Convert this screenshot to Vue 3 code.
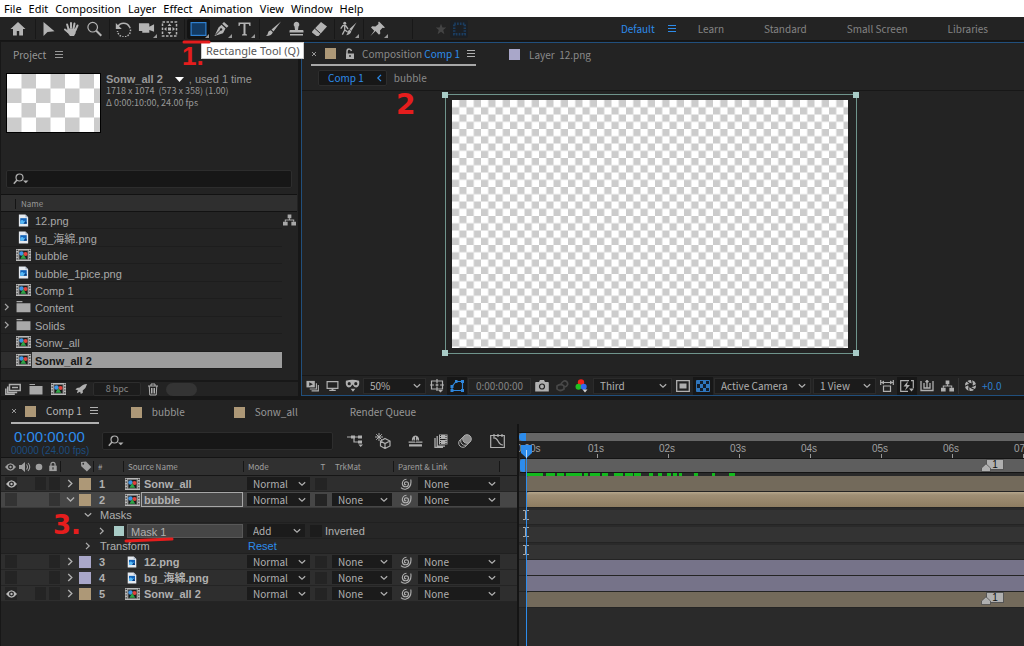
<script setup>
import { ref } from 'vue'

const menus = ['File', 'Edit', 'Composition', 'Layer', 'Effect', 'Animation', 'View', 'Window', 'Help']

const toolGroups = [
  [{ id: 'arrow', label: 'Selection Tool' }, { id: 'hand', label: 'Hand Tool' }, { id: 'zoom', label: 'Zoom Tool' }],
  [{ id: 'rotate', label: 'Rotation Tool' }, { id: 'camera', label: 'Camera Tool', more: true }, { id: 'anchor', label: 'Pan Behind Tool' }],
  [{ id: 'rect', label: 'Rectangle Tool', more: true, active: true }, { id: 'pen', label: 'Pen Tool', more: true }, { id: 'type', label: 'Type Tool', more: true }],
  [{ id: 'brush', label: 'Brush Tool' }, { id: 'stamp', label: 'Clone Stamp Tool' }, { id: 'eraser', label: 'Eraser Tool' }],
  [{ id: 'roto', label: 'Roto Brush Tool', more: true }],
  [{ id: 'pin', label: 'Puppet Pin Tool', more: true }]
]

const workspaces = ['Learn', 'Standard', 'Small Screen', 'Libraries']

const items = [
  { name: '12.png', icon: 'png' },
  { name: 'bg_海綿.png', icon: 'png' },
  { name: 'bubble', icon: 'comp' },
  { name: 'bubble_1pice.png', icon: 'png' },
  { name: 'Comp 1', icon: 'comp' },
  { name: 'Content', icon: 'folder', open: true },
  { name: 'Solids', icon: 'folder', open: true },
  { name: 'Sonw_all', icon: 'comp' },
  { name: 'Sonw_all 2', icon: 'comp', selected: true }
]

const rows = [
  { kind: 'layer', n: 1, name: 'Sonw_all', icon: 'comp', color: 'sand', visible: true, solo: true },
  { kind: 'layer', n: 2, name: 'bubble', icon: 'comp', color: 'sand', matte: true, selected: true },
  { kind: 'masks' },
  { kind: 'mask' },
  { kind: 'transform' },
  { kind: 'layer', n: 3, name: '12.png', icon: 'png', color: 'lavender', matte: true },
  { kind: 'layer', n: 4, name: 'bg_海綿.png', icon: 'png', color: 'lavender', matte: true },
  { kind: 'layer', n: 5, name: 'Sonw_all 2', icon: 'comp', color: 'sand', matte: true, visible: true, solo: true, marker: true }
]

const seconds = [1, 2, 3, 4, 5, 6, 7]
const secondWidth = 71
const cached = [[0, 17], [20, 9], [31, 7], [40, 16], [58, 4], [64, 10], [76, 6], [88, 9], [99, 8], [108, 7], [123, 4], [132, 4], [141, 4], [147, 4], [153, 3], [168, 4], [186, 3], [203, 6]]

const projectQuery = ref('')
const layerQuery = ref('')
</script>

<template>
  <svg class="defs" aria-hidden="true">
    <symbol id="home" viewBox="0 0 16 16"><path fill="currentColor" d="M8 1 .5 8H3v6.500h3.800V10h2.400v4.500H13V8h2.500z" /></symbol>
    <symbol id="arrow" viewBox="0 0 16 16"><path fill="currentColor" d="M3 1v14l4-4 7-.8z" /></symbol>
    <symbol id="hand" viewBox="0 0 16 16"><path fill="none" stroke="currentColor" stroke-width="2" stroke-linecap="round" d="M5 8 3.600 3.500M7.500 7V2M10 7.500l1-5M12 9l2-4.500M4.500 11 1.500 8.500" /><path fill="currentColor" d="M4 7.500l9 .2-1 4.500L10.500 15H6.500L3.500 11z" /></symbol>
    <symbol id="zoom" viewBox="0 0 16 16"><circle cx="6.200" cy="6.200" r="4.800" fill="none" stroke="currentColor" stroke-width="1.200" /><path stroke="currentColor" stroke-width="2" d="m9.800 9.800 5 5" /></symbol>
    <symbol id="rotate" viewBox="0 0 16 16"><path fill="none" stroke="currentColor" stroke-width="1.500" d="M2.200 6A6.500 6.500 0 0 1 14 6" /><path fill="none" stroke="currentColor" stroke-width="1.500" stroke-dasharray="1.500 1.300" d="M14 6A6.500 6.500 0 1 1 2 10" /><path fill="currentColor" d="M.3 2v6h6z" /></symbol>
    <symbol id="camera" viewBox="0 0 18 16"><path fill="currentColor" d="M1 2h10q1 0 1 1v2.500L17 3v8l-5-2v3H4.500v-2H1z" /></symbol>
    <symbol id="anchor" viewBox="0 0 16 16"><rect x="1" y="1" width="14" height="14" fill="none" stroke="currentColor" stroke-width="1.500" stroke-dasharray="2.500 1.500" /><path fill="currentColor" d="M8 2.500 10 5H6zM8 13.500 6 11h4zM2.500 8 5 6v4zM13.500 8 11 10V6zM6.500 6.500h3v3h-3z" /></symbol>
    <symbol id="rect" viewBox="0 0 16 16"><rect x=".6" y="1.600" width="14.800" height="12.800" fill="#123a63" stroke="#2f80d0" stroke-width="1.200" /></symbol>
    <symbol id="pen" viewBox="0 0 16 16"><path fill="currentColor" d="m10.500 1 4.500 4-1.800 1.800-4.500-4zM8 3.800l4 3.800-2.500 4.600L1 15l4-8.500z" /><path stroke="#232323" d="m2 14 5-5" /><circle cx="7.600" cy="8.400" r="1.200" fill="#232323" /></symbol>
    <symbol id="type" viewBox="0 0 16 16"><path fill="currentColor" d="M2 1.500h12V5h-1l-.8-2H9v10l1.500.6v.9h-5v-.9L7 13V3H3.800L3 5H2z" /></symbol>
    <symbol id="brush" viewBox="0 0 16 16"><path fill="currentColor" d="M15.500.5 8 10.500 6 8.500zM5.300 9.300l2 2Q6.500 15 .5 15q2-1.200 2-3.200t2.800-2.500" /></symbol>
    <symbol id="stamp" viewBox="0 0 16 16"><path fill="currentColor" d="M8 .8a2.800 2.800 0 0 1 2 4.800L9.500 9h4.700q.8 0 .8 1v1.500H1V10q0-1 .8-1h4.700L6 5.600A2.800 2.800 0 0 1 8 .8M1.500 13h13v1.500h-13z" /></symbol>
    <symbol id="eraser" viewBox="0 0 16 16"><path fill="currentColor" d="M9.500 1 15.500 5.500 7 15H5L.5 11.500v-1z" /><path stroke="#232323" d="m3.500 7.500 5.500 5" /></symbol>
    <symbol id="roto" viewBox="0 0 18 16"><circle cx="5" cy="2" r="1.600" fill="currentColor" /><path fill="none" stroke="currentColor" stroke-width="1.400" d="M.8 7.500 3 4.500h3L8.500 8M5 4.500V9L2.500 14M5 9l3 2" /><path fill="currentColor" d="M17.500 1 12 10l-2-2zM9.500 8.500l2.500 2q-1 4-5.500 4 1.500-1.500 1.500-3z" /></symbol>
    <symbol id="pin" viewBox="0 0 16 16"><path fill="currentColor" d="m9.500.5 6 6-1.500.5-1-.3-2.500 2.800.3 3-1.300 1.300-3.500-3.700L1 15l3.700-5.200L1.500 6.500l1.200-1.200 3.200.2L9 3 8.700 1.500z" /></symbol>
    <symbol id="star" viewBox="0 0 16 16"><path fill="currentColor" d="m8 1 2 5h5l-4 3.300L12.500 15 8 11.500 3.500 15 5 9.300 1 6h5z" /></symbol>
    <symbol id="snap" viewBox="0 0 16 16"><rect x="1.500" y="1.500" width="13" height="13" fill="none" stroke="#1b3d60" stroke-width="3" stroke-dasharray="2 1.500" /></symbol>
    <symbol id="menu" viewBox="0 0 10 10"><path stroke="currentColor" d="M1 1.500h8M1 4.500h8M1 7.500h8" /></symbol>
    <symbol id="cross" viewBox="0 0 6 6"><path stroke="currentColor" d="m1 1 4 4M5 1 1 5" /></symbol>
    <symbol id="unlock" viewBox="0 0 12 12"><path fill="currentColor" d="M3 5.500h8V11H3z" /><path fill="none" stroke="currentColor" stroke-width="1.500" d="M4 6V3.500Q4 1 6 1t2.500 2" /><path fill="#232323" d="M6.300 7h1.400v2H6.300z" /></symbol>
    <symbol id="lock" viewBox="0 0 12 12"><path fill="currentColor" d="M1.500 5h9v6.500h-9z" /><path fill="none" stroke="currentColor" stroke-width="1.500" d="M3.500 6V3.500Q3.500 1 6 1t2.500 2.500V6" /><path fill="#303030" d="M5.300 7h1.400v2.500H5.300z" /></symbol>
    <symbol id="search" viewBox="0 0 16 12"><circle cx="6.500" cy="4.500" r="3.500" fill="none" stroke="currentColor" stroke-width="1.200" /><path stroke="currentColor" stroke-width="1.500" d="M4 7 .8 10.800" /><path fill="currentColor" d="M10 7.500h5.500l-2.700 2.800z" /></symbol>
    <symbol id="png" viewBox="0 0 11 14"><path fill="#e4e9ef" d="M.5.500h7L10.500 3.500v10H.5z" /><path fill="#a9b7c8" d="M7.500.5v3h3z" /><path fill="#1262b8" d="M2 4.500h7v6H2z" /><path fill="#55b8f5" d="M2 8q2-3 4 0l1-1 2 2v1.500H2z" /><path fill="#0b3b80" d="m5.500 10.500 2-3L9 9v1.500z" /></symbol>
    <symbol id="comp" viewBox="0 0 15 12"><path fill="#b9b9b9" d="M0 0h15v12H0z" /><path stroke="#222" stroke-width="1.200" stroke-dasharray="1.200 1.600" d="M1.200.8V12M13.800.8V12" /><path fill="#777" d="M2.500 1h10v10h-10z" /><path fill="#1c1c1c" d="M3.500 2h8v8h-8z" /><circle cx="5.500" cy="4.500" r="2.200" fill="#3e95e6" /><circle cx="9.500" cy="5" r="2.100" fill="#e2423c" /><path fill="#2fa447" d="m7.300 5 2.900 4.700H4.400z" /></symbol>
    <symbol id="folder" viewBox="0 0 14 11"><path fill="#a9a9a9" d="M.5 0H6v1H.500zM.5 2h13v8.500H.500z" /></symbol>
    <symbol id="chev" viewBox="0 0 8 8"><path fill="none" stroke="currentColor" stroke-width="1.200" d="m2 .8 3.200 3.200L2 7.200" /></symbol>
    <symbol id="chevd" viewBox="0 0 8 8"><path fill="none" stroke="currentColor" stroke-width="1.200" d="M.8 2.300 4 5.300l3.200-3" /></symbol>
    <symbol id="tree" viewBox="0 0 14 12"><path fill="currentColor" d="M5 0h4v4H5zM0 8h5v4H0zM9 8h5v4H9z" /><path fill="none" stroke="currentColor" stroke-width="1.200" d="M7 4v2M2.500 8V6h9v2" /></symbol>
    <symbol id="interpret" viewBox="0 0 16 12"><path fill="none" stroke="currentColor" stroke-width="1.500" d="M4.500 1.500h10.700v6H4.500zM2.700 3.500v6h9.500M.8 5.500v5.700h9" /><path stroke="currentColor" stroke-width="1.500" d="M7 4.500h6" /></symbol>
    <symbol id="rocket" viewBox="0 0 14 12"><path fill="currentColor" d="M13 .5Q8 .8 5 4.500l-3 .3-1.500 2 2.500.4-1 3.300 3.500-1.500.8 2.500L8.500 10l-.2-2.500Q12 5 13 .500" /></symbol>
    <symbol id="trash" viewBox="0 0 12 13"><path fill="none" stroke="currentColor" d="M1 3h10M4 3V1h4v2M2.200 3l.6 9h6.400l.6-9M4.500 5v5.500M6 5v5.500M7.500 5v5.500" /></symbol>
    <symbol id="always" viewBox="0 0 14 12"><path fill="currentColor" d="M.5.500h9v7h-9z" /><path fill="none" stroke="currentColor" stroke-width="1.200" d="M11.200 3v6.200H4M13.300 5v6.300H6" /><path fill="#232323" d="m3.500 2 4 2-4 2z" /></symbol>
    <symbol id="monitor" viewBox="0 0 14 12"><path fill="none" stroke="currentColor" stroke-width="1.300" d="M1.200 1.200h11.600v7.300H1.200z" /><path fill="currentColor" d="M6 8.500h2V10h2.500v1.500h-7V10H6z" /></symbol>
    <symbol id="mask" viewBox="0 0 16 14"><path fill="currentColor" d="M1 1.500q7-2.500 14 0 1 6-3 7-2.500 0-4-3-1.500 3-4 3-4-1-3-7M6 10h5l-2.500 3z" /><circle cx="4.500" cy="4.500" r="1.700" fill="#232323" /><circle cx="11.500" cy="4.500" r="1.700" fill="#232323" /></symbol>
    <symbol id="guides" viewBox="0 0 14 14"><path fill="none" stroke="currentColor" stroke-width="1.200" d="M1.500 2h11v8h-11zM7 0v4M7 8v4M0 6h4M10 6h4M5.500 6h3M7 4.500v3" /><path fill="currentColor" d="M8 11h5l-2.500 2.500z" /></symbol>
    <symbol id="shape" viewBox="0 0 14 12"><path fill="none" stroke="#2f86dc" stroke-width="1.200" d="M2 10.500V6.500L6 1.500h6.500v9z" /><path fill="#2f86dc" d="M.5 9h3v3h-3zM.5 5h3v3h-3zM5 0h2.500v3H5zM11 0h3v3h-3zM11 9h3v3h-3z" /></symbol>
    <symbol id="photo" viewBox="0 0 14 12"><path fill="currentColor" d="M1 2h3l1-2h4l1 2h3q.8 0 .8 1v8.500H.2V3q0-1 .8-1" /><circle cx="7" cy="6.500" r="2.500" fill="none" stroke="#232323" stroke-width="1.200" /></symbol>
    <symbol id="ghost" viewBox="0 0 14 12"><path fill="none" stroke="#484848" stroke-width="1.700" d="M2 6q4-3 7 0v3q-4 3-7 0zM6 4q3-5 6-2 2 3-2 5" /></symbol>
    <symbol id="rgb" viewBox="0 0 14 14"><circle cx="6" cy="3.500" r="3.200" fill="#f0211a" /><circle cx="3.500" cy="7.800" r="3" fill="#21bf20" /><circle cx="8.700" cy="7.800" r="3" fill="#3469f0" /><path fill="#d0d0d0" d="M7.500 10.500h5L10 13.500z" /></symbol>
    <symbol id="roi" viewBox="0 0 14 12"><path fill="none" stroke="currentColor" stroke-width="1.300" d="M.7.700h12.600v10.600H.7z" /><path fill="currentColor" d="M3.500 3.500h7v5h-7z" /></symbol>
    <symbol id="grid" viewBox="0 0 14 12"><path fill="#111d2b" d="M0 0h14v12H0z" /><path fill="none" stroke="#2f76bd" d="M.5.500h13v11H.500z" /><path fill="#2f76bd" d="M1 1h3v3H1zM7 1h3v3H7zM4 4h3v4H4zM10 4h3v4h-3zM1 8h3v3H1zM7 8h3v3H7z" /></symbol>
    <symbol id="pixel" viewBox="0 0 14 12"><path fill="none" stroke="currentColor" stroke-width="1.200" d="M1 2.500h12M.7 0v5M13.300 0v5M3.500 6h7v5.300h-7z" /><path fill="currentColor" d="m1 2.500 3-2v4zM13 2.500l-3-2v4z" /></symbol>
    <symbol id="fast" viewBox="0 0 14 12"><path fill="none" stroke="currentColor" stroke-width="1.200" d="M9 .7H.7v10.600H8M11 .7h2.300V8" /><path fill="currentColor" d="M8 1 3.500 6.500h3L5 10.500 10 5H7zM9 8.500h5l-2.500 3z" /></symbol>
    <symbol id="timegraph" viewBox="0 0 14 12"><path fill="none" stroke="currentColor" stroke-width="1.300" d="M1 1v9.500h12V1M4 3v5h6V3M7 .5V8M5.500 2 7 .5 8.500 2" /></symbol>
    <symbol id="aperture" viewBox="0 0 14 14"><circle cx="7" cy="7" r="4.300" fill="none" stroke="currentColor" stroke-width="3.400" /><path stroke="#232323" stroke-width="1.100" d="m8 .5 1 5M13.500 6 9 8M12 11.500 7.500 9.500M5.500 13.500 5 9M.5 8 5 6M2.500 2l4 3" /></symbol>
    <symbol id="flow" viewBox="0 0 16 13"><path fill="none" stroke="currentColor" stroke-width="1.200" d="M0 3h13M7 3v5h6" /><path fill="currentColor" d="M4 1.500h4v3H4zM11 1.500h4v3h-4zM11 6.500h4v3h-4zM11.500 10.500H16L13.700 13z" /></symbol>
    <symbol id="draft" viewBox="0 0 16 16"><path fill="none" stroke="currentColor" stroke-width="1.200" d="m10 5.500 5 2.500v5l-5 2.500L5.500 13V8zM5.500 8l4.500 2.500L15 8M10 10.500v5" /><path stroke="currentColor" d="M4 0v8M0 4h8M1.200 1.200l5.600 5.600M6.800 1.200 1.200 6.800" /></symbol>
    <symbol id="shy" viewBox="0 0 16 13"><path fill="currentColor" d="M4 6q0-5 4-5.500Q12 1 12 6zM.5 7h15v1.500H.500zM1 10h14v2.500H1z" /><path stroke="#232323" d="M8 2v6M5.500 5.500h1M9.500 5.500h1" /></symbol>
    <symbol id="blend" viewBox="0 0 14 14"><path fill="currentColor" d="M5 .500h8.500v10H5z" /><path fill="none" stroke="currentColor" stroke-width="1.300" d="M3.200 2v10.200H11M1 4v9.500h8" /><path stroke="#232323" stroke-dasharray="1 1" d="M6.500 1v9M12 1v9" /><path stroke="#232323" d="M7 5.500h4.500" /></symbol>
    <symbol id="blur" viewBox="0 0 14 14"><circle cx="5" cy="9" r="4.300" fill="none" stroke="currentColor" /><circle cx="7" cy="7" r="4.300" fill="#232323" stroke="currentColor" /><circle cx="9" cy="5" r="4.300" fill="#8c8c8c" stroke="currentColor" /></symbol>
    <symbol id="graph" viewBox="0 0 15 14"><path fill="none" stroke="currentColor" stroke-width="1.200" d="M.7 1.500h13.600v12H.7zM3 4q3-1 5 3t5 4M4 0v3M8 0v3M12 0v3" /></symbol>
    <symbol id="eye" viewBox="0 0 12 8"><path fill="currentColor" d="M0 4q3-4 6-4t6 4Q9 8 6 8T0 4" /><circle cx="6" cy="4" r="2.700" fill="#242424" /><circle cx="6" cy="4" r="1.300" fill="currentColor" /></symbol>
    <symbol id="speaker" viewBox="0 0 12 10"><path fill="currentColor" d="M0 3h2.500L6 0v10L2.500 7H0z" /><path fill="none" stroke="currentColor" stroke-width="1.100" d="M7.500 2.500q2 2.500 0 5M9 1q3.500 4 0 8" /></symbol>
    <symbol id="solo" viewBox="0 0 8 8"><circle cx="4" cy="4" r="3.300" fill="currentColor" /></symbol>
    <symbol id="tag" viewBox="0 0 12 12"><path fill="currentColor" d="M.5 1 6 .500 11.800 6.500 7 11.500.8 5.800z" /><circle cx="3" cy="3" r="1" fill="#303030" /></symbol>
    <symbol id="spiral" viewBox="0 0 12 12"><path fill="none" stroke="currentColor" stroke-width="1.100" d="M6.200 6.300q-1.200 1-1.700-.3-.3-2 1.700-2.200 2.300 0 2.300 2.300-.2 2.700-3 2.700-3-.2-3.200-3.200Q2.600 1.500 6.500 1.200M10.800 1.500q1.200 8-5.300 9.700-3 .3-4.500-1.500" /></symbol>
    <symbol id="beam" viewBox="0 0 8 10"><path fill="none" stroke="#a9a9a9" d="M1 .500h2.500v9H1M7 .500H4.500v9H7" /></symbol>
    <symbol id="house" viewBox="0 0 10 9"><path fill="#b0b0b0" stroke="#444" stroke-width=".7" d="M.5 8.500V5L5 .800 9.500 5v3.500z" /></symbol>
  </svg>

  <div class="app">
    <nav class="menubar" aria-label="Main menu">
      <button v-for="m in menus" :key="m" type="button">{{ m }}</button>
    </nav>

    <header class="toolbar">
      <button class="home" type="button" aria-label="Home"><svg width="16" height="16"><use href="#home" /></svg></button>
      <i class="first"></i>
      <template v-for="(g, gi) in toolGroups" :key="gi">
        <i v-if="gi"></i>
        <button v-for="t in g" :key="t.id" class="tool" :class="{ active: t.active, more: t.more }" type="button" :aria-label="t.label">
          <svg width="17" height="16"><use :href="'#' + t.id" /></svg>
          <span v-if="t.active" class="tip">Rectangle Tool (Q)</span>
        </button>
      </template>
      <i class="wide"></i>
      <button class="mini" type="button" aria-label="Favourite"><svg width="12" height="12"><use href="#star" /></svg></button>
      <button class="mini boxed" type="button" aria-label="Snapping"><svg width="13" height="14"><use href="#snap" /></svg></button>
      <nav class="spaces" aria-label="Workspaces">
        <span class="current"><button type="button">Default</button><button type="button" aria-label="Workspace menu"><svg width="10" height="10"><use href="#menu" /></svg></button></span>
        <button v-for="w in workspaces" :key="w" type="button">{{ w }}</button>
      </nav>
    </header>

    <main class="upper">
      <section class="project">
        <div class="ptab"><span>Project</span><button type="button" aria-label="Panel menu"><svg width="10" height="10"><use href="#menu" /></svg></button></div>
        <div class="info">
          <svg class="thumb" width="95" height="60" viewBox="0 0 95 60">
            <defs><pattern id="big" x="1" y="1" width="29" height="29" patternUnits="userSpaceOnUse"><path fill="#fff" d="M0 0h29v29H0z" /><path fill="#ccc" d="M14.500 0H29v14.500H14.500zM0 14.500h14.500V29H0z" /></pattern></defs>
            <path fill="#000" d="M0 0h95v60H0z" /><path fill="url(#big)" d="M1 1h93v58H1z" />
          </svg>
          <div class="meta">
            <p class="title"><b>Sonw_all 2</b><svg width="9" height="5"><path fill="#fff" d="M0 0h9L4.500 5z" /></svg><span>, used 1 time</span></p>
            <p>1718 x 1074&nbsp; (573 x 358) (1.00)</p>
            <p>Δ 0:00:10:00, 24.00 fps</p>
          </div>
        </div>
        <label class="search"><svg width="16" height="12"><use href="#search" /></svg><input v-model="projectQuery" type="text" aria-label="Search project"></label>
        <div class="listing">
          <table>
            <thead><tr><th scope="col">Name</th></tr></thead>
            <tbody>
              <tr v-for="it in items" :key="it.name" :class="{ selected: it.selected }">
                <td>
                  <span class="twirl"><svg v-if="it.open" width="8" height="8"><use href="#chev" /></svg></span>
                  <span class="kind"><svg :width="it.icon === 'png' ? 11 : 15" :height="it.icon === 'png' ? 13 : 12"><use :href="'#' + it.icon" /></svg></span>
                  <span class="label">{{ it.name }}</span>
                </td>
              </tr>
            </tbody>
          </table>
          <button class="chart" type="button" aria-label="Project flowchart"><svg width="13" height="12"><use href="#tree" /></svg></button>
        </div>
        <footer class="pfoot">
          <button type="button" aria-label="Interpret footage"><svg width="16" height="12"><use href="#interpret" /></svg></button>
          <button type="button" aria-label="New folder"><svg width="14" height="11"><use href="#folder" /></svg></button>
          <button type="button" aria-label="New composition"><svg width="15" height="12"><use href="#comp" /></svg></button>
          <button type="button" aria-label="Project settings"><svg width="13" height="12"><use href="#rocket" /></svg></button>
          <button class="bpc" type="button">8 bpc</button>
          <button type="button" aria-label="Delete"><svg width="12" height="13"><use href="#trash" /></svg></button>
          <span class="thumbbar"></span>
        </footer>
      </section>

      <section class="viewer">
        <div class="vtabs">
          <div class="vtab on">
            <button class="x" type="button" aria-label="Close"><svg width="6" height="6"><use href="#cross" /></svg></button><i class="sw sand"></i>
            <svg class="latch" width="12" height="12"><use href="#unlock" /></svg>
            <span>Composition <b>Comp 1</b></span>
            <button class="pm" type="button" aria-label="Panel menu"><svg width="10" height="10"><use href="#menu" /></svg></button>
          </div>
          <div class="vtab"><i class="sw lavender"></i><span>Layer&nbsp; 12.png</span></div>
        </div>
        <div class="crumbs">
          <button class="crumb" type="button">Comp 1 <svg width="8" height="8"><use href="#chev" /></svg></button>
          <button type="button">bubble</button>
        </div>
        <div class="stage">
          <div class="frame">
            <svg width="100%" height="100%">
              <defs><pattern id="small" width="14.500" height="14.500" patternUnits="userSpaceOnUse"><path fill="#fff" d="M0 0h14.500v14.500H0z" /><path fill="#ccc" d="M7.250 0h7.250v7.250H7.250zM0 7.250h7.250v7.250H0z" /></pattern></defs>
              <rect width="100%" height="100%" fill="url(#small)" />
            </svg>
            <i class="h tl"></i><i class="h tr"></i><i class="h bl"></i><i class="h br"></i>
          </div>
        </div>
        <footer class="vfoot">
          <button type="button" aria-label="Always preview"><svg width="13" height="12"><use href="#always" /></svg></button>
          <button type="button" aria-label="Primary viewer"><svg width="13" height="12"><use href="#monitor" /></svg></button>
          <button type="button" aria-label="Stereo view"><svg width="15" height="14"><use href="#mask" /></svg></button>
          <label class="drop zoomsel"><select aria-label="Magnification"><option>50%</option></select><svg width="8" height="8"><use href="#chevd" /></svg></label>
          <button type="button" aria-label="Grid and guides"><svg width="14" height="14"><use href="#guides" /></svg></button>
          <button class="dark" type="button" aria-label="Mask visibility"><svg width="14" height="12"><use href="#shape" /></svg></button>
          <button class="clock" type="button">0:00:00:00</button>
          <button type="button" aria-label="Take snapshot"><svg width="14" height="12"><use href="#photo" /></svg></button>
          <button type="button" aria-label="Show snapshot"><svg width="14" height="12"><use href="#ghost" /></svg></button>
          <button type="button" aria-label="Channels"><svg width="14" height="14"><use href="#rgb" /></svg></button>
          <label class="drop ressel"><select aria-label="Resolution"><option>Third</option></select><svg width="8" height="8"><use href="#chevd" /></svg></label>
          <button type="button" aria-label="Region of interest"><svg width="14" height="12"><use href="#roi" /></svg></button>
          <button class="dark" type="button" aria-label="Transparency grid"><svg width="14" height="12"><use href="#grid" /></svg></button>
          <label class="drop camsel"><select aria-label="3D view"><option>Active Camera</option></select><svg width="8" height="8"><use href="#chevd" /></svg></label>
          <label class="drop viewsel"><select aria-label="View layout"><option>1 View</option></select><svg width="8" height="8"><use href="#chevd" /></svg></label>
          <button type="button" aria-label="Pixel aspect ratio"><svg width="14" height="12"><use href="#pixel" /></svg></button>
          <button class="dark" type="button" aria-label="Fast previews"><svg width="14" height="12"><use href="#fast" /></svg></button>
          <button type="button" aria-label="Timeline"><svg width="14" height="12"><use href="#timegraph" /></svg></button>
          <button type="button" aria-label="Flowchart"><svg width="13" height="12"><use href="#tree" /></svg></button>
          <i class="bar"></i>
          <button type="button" aria-label="Reset exposure"><svg width="13" height="13"><use href="#aperture" /></svg></button>
          <button class="expo" type="button">+0.0</button>
        </footer>
      </section>
    </main>

    <section class="timeline">
      <div class="ttabs">
        <div class="ttab on"><button class="x" type="button" aria-label="Close"><svg width="6" height="6"><use href="#cross" /></svg></button><i class="sw sand"></i><span>Comp 1</span><button class="pm" type="button" aria-label="Panel menu"><svg width="10" height="10"><use href="#menu" /></svg></button></div>
        <div class="ttab t2"><i class="sw sand"></i><span>bubble</span></div>
        <div class="ttab t3"><i class="sw sand"></i><span>Sonw_all</span></div>
        <div class="ttab t4"><span>Render Queue</span></div>
      </div>
      <div class="tbody">
        <div class="outline">
          <div class="tctl">
            <div class="time"><button type="button">0:00:00:00</button><span>00000 (24.00 fps)</span></div>
            <label class="search lsearch"><svg width="16" height="12"><use href="#search" /></svg><input v-model="layerQuery" type="text" aria-label="Search layers"></label>
            <div class="switches">
              <button type="button" aria-label="Mini-flowchart"><svg width="16" height="13"><use href="#flow" /></svg></button>
              <button type="button" aria-label="Draft 3D"><svg width="16" height="16"><use href="#draft" /></svg></button>
              <button type="button" aria-label="Hide shy layers"><svg width="15" height="12"><use href="#shy" /></svg></button>
              <button type="button" aria-label="Frame blending"><svg width="14" height="14"><use href="#blend" /></svg></button>
              <button type="button" aria-label="Motion blur"><svg width="14" height="14"><use href="#blur" /></svg></button>
              <button type="button" aria-label="Graph editor"><svg width="15" height="14"><use href="#graph" /></svg></button>
            </div>
          </div>
          <table class="layers">
            <thead>
              <tr>
                <th scope="col" aria-label="Video"><svg width="11" height="8"><use href="#eye" /></svg></th>
                <th scope="col" aria-label="Audio"><svg width="12" height="10"><use href="#speaker" /></svg></th>
                <th scope="col" aria-label="Solo"><svg width="8" height="8"><use href="#solo" /></svg></th>
                <th scope="col" aria-label="Lock"><svg width="10" height="11"><use href="#lock" /></svg></th>
                <th class="sep"></th>
                <th scope="col" aria-label="Label"><svg width="12" height="11"><use href="#tag" /></svg></th>
                <th class="sep num" scope="col">#</th>
                <th class="sep src" scope="col">Source Name</th>
                <th class="sep" scope="col">Mode</th>
                <th class="mid" scope="col">T</th>
                <th class="trk" scope="col">TrkMat</th>
                <th class="sep par" scope="col">Parent &amp; Link</th>
                <th class="sep"></th>
              </tr>
            </thead>
            <tbody>
              <template v-for="(r, i) in rows" :key="i">
                <tr v-if="r.kind === 'layer'" :class="{ selected: r.selected }">
                  <td><button class="cell" type="button" :aria-label="'Visibility of ' + r.name"><svg v-if="r.visible" width="11" height="8"><use href="#eye" /></svg></button></td>
                  <td></td>
                  <td><button v-if="r.solo" class="cell" type="button" :aria-label="'Solo ' + r.name"></button></td>
                  <td><button class="cell" type="button" :aria-label="'Lock ' + r.name"></button></td>
                  <td class="mid twist"><svg width="9" height="9"><use :href="r.selected ? '#chevd' : '#chev'" /></svg></td>
                  <td><i class="sw" :class="r.color"></i></td>
                  <td class="idx">{{ r.n }}</td>
                  <td class="name"><span class="kind"><svg :width="r.icon === 'png' ? 10 : 15" height="12"><use :href="'#' + r.icon" /></svg></span><b>{{ r.name }}</b></td>
                  <td><label class="drop"><select :aria-label="'Mode of ' + r.name"><option>Normal</option></select><svg width="8" height="8"><use href="#chevd" /></svg></label></td>
                  <td class="mid"><input class="flag" type="checkbox" :aria-label="'Preserve transparency of ' + r.name"></td>
                  <td><label v-if="r.matte" class="drop"><select :aria-label="'Track matte of ' + r.name"><option>None</option></select><svg width="8" height="8"><use href="#chevd" /></svg></label></td>
                  <td class="mid"><svg width="12" height="12"><use href="#spiral" /></svg></td>
                  <td><label class="drop"><select :aria-label="'Parent of ' + r.name"><option>None</option></select><svg width="8" height="8"><use href="#chevd" /></svg></label></td>
                </tr>
                <tr v-else-if="r.kind === 'masks'" class="prop"><td class="lead"><svg width="8" height="8"><use href="#chevd" /></svg>Masks</td></tr>
                <tr v-else-if="r.kind === 'mask'" class="prop tall">
                  <td class="lead deep"><svg width="8" height="8"><use href="#chev" /></svg><i class="sw aqua"></i><span class="maskname">Mask 1</span></td>
                  <td><label class="drop"><select aria-label="Mask mode"><option>Add</option></select><svg width="8" height="8"><use href="#chevd" /></svg></label></td>
                  <td class="inv"><label><input class="flag" type="checkbox">Inverted</label></td>
                </tr>
                <tr v-else class="prop"><td class="lead"><svg width="8" height="8"><use href="#chev" /></svg>Transform</td><td class="resetcell"><button class="reset" type="button">Reset</button></td></tr>
              </template>
            </tbody>
          </table>
        </div>

        <div class="tracks">
          <div class="navbar"><i></i></div>
          <div class="ruler">
            <span class="zero">0:00s</span>
            <span v-for="s in seconds" :key="s" class="sec" :style="{ left: s * secondWidth + 7 + 'px' }">0{{ s }}s</span>
          </div>
          <div class="area"><i class="grip"></i><span class="marker"><svg width="10" height="9"><use href="#house" /></svg><em>1</em></span></div>
          <div class="cache"><i v-for="c in cached" :key="c[0]" :style="{ left: c[0] + 'px', width: c[1] + 'px' }"></i></div>
          <div v-for="(r, i) in rows" :key="i" class="track" :class="[r.kind, r.color, { selected: r.selected }]">
            <div v-if="r.kind === 'layer'" class="clip"></div>
            <svg v-else width="8" height="10"><use href="#beam" /></svg>
            <span v-if="r.marker" class="marker"><svg width="10" height="9"><use href="#house" /></svg><em>1</em></span>
          </div>
          <div class="playhead"><svg width="11" height="13"><path fill="#2d8ceb" d="M0 0h11v8l-5.500 5L0 8z" /><path stroke="#bcd8f5" d="M5.500 5v8" /></svg></div>
        </div>
      </div>
    </section>

    <div class="note one">1.<svg width="29" height="4"><path d="M2 2h25" /></svg></div>
    <div class="note two">2</div>
    <div class="note three">3.</div>
    <svg class="note line" width="50" height="6"><path d="M2 4q22-1 46-2" /></svg>
  </div>
</template>

<style>
body { background: #232323; overflow: hidden; }
</style>

<style scoped>
.defs { position: absolute; width: 0; height: 0; }
.app {
  position: relative; display: flex; flex-direction: column; min-height: 100vh; overflow: hidden;
  background: #171717; color: #989898;
  font: 10px/14px "Noto Sans CJK KR", "Noto Sans", sans-serif;
}
.app * { box-sizing: border-box; }
button, select, input { margin: 0; padding: 0; border: 0; background: none; color: inherit; font: inherit; outline: 0; }
svg { display: block; flex: none; }
p { margin: 0; }
b, em { font-style: normal; }
i { flex: none; }

.menubar { display: flex; gap: 7px; height: 17px; padding: 0 4px; background: #fff; color: #000; font: 11px/16px "Noto Sans", sans-serif; }

.toolbar { display: flex; align-items: center; height: 24px; padding-left: 3px; background: #232323; border-bottom: 1px solid #151515; color: #b4b4b4; }
.toolbar > i { width: 6px; height: 20px; background: linear-gradient(#181818, #181818) center / 1px 100% no-repeat; }
.toolbar > i.first { width: 4px; }
.toolbar > i.wide { margin-left: 20px; }
.home { display: flex; justify-content: center; width: 30px; }
.tool { position: relative; display: flex; align-items: center; justify-content: center; width: 23px; height: 20px; }
.tool.active { background: #131313; border-radius: 2px; }
.tool.more::after { content: ""; position: absolute; right: 1px; bottom: 1px; border: 2px solid; border-color: transparent #999 #999 transparent; }
.tip { position: absolute; z-index: 5; left: 14px; top: 23px; padding: 0 4px; background: #fff; border: 1px solid #ccc; color: #575757; font: 11px/15px "Noto Sans", sans-serif; white-space: nowrap; }
.mini { display: flex; align-items: center; justify-content: center; width: 18px; height: 18px; color: #444; }
.wide + .mini { margin-left: 17px; }
.mini.boxed { background: #1b1f24; border-radius: 2px; }
.spaces { display: flex; gap: 40px; margin-left: auto; padding: 1px 36px 0 0; color: #848484; }
.current { display: flex; align-items: center; gap: 12px; margin-right: -19px; color: #2d8ceb; }

.upper { display: flex; gap: 3px; height: 357px; padding: 1px 0 2px 1px; }
.project { display: flex; flex-direction: column; flex: 0 0 297px; background: #232323; }
.ptab { display: flex; align-items: center; gap: 8px; height: 26px; padding: 0 12px; }
.info { display: flex; gap: 5px; height: 60px; margin: 5px 5px 0; }
.meta { font-size: 9px; line-height: 12px; }
.title { display: flex; align-items: center; font: 11px/12px "Liberation Sans", sans-serif; }
.title b { margin-right: 12px; }
.title span { margin-left: 5px; }
.search { display: flex; align-items: center; height: 18px; margin: 37px 6px 0 5px; padding-left: 6px; background: #171717; border: 1px solid #2d2d2d; border-radius: 2px; color: #b0b0b0; }
.search input { flex: 1; min-width: 0; }
.listing { position: relative; margin-top: 6px; padding-bottom: 11px; }
table { display: block; border-spacing: 0; }
thead, tbody, tr, th, td { display: block; padding: 0; text-align: left; font-weight: 400; }
.project th { height: 18px; margin-right: 1px; padding: 2px 0 0 20px; border: solid #121212; border-width: 1px 0; background: linear-gradient(#141414, #141414) 14px 4px / 1px 10px no-repeat #2f2f2f; font-size: 8px; line-height: 14px; }
.project tbody { display: grid; grid-auto-rows: minmax(0, 1fr); height: 157px; margin-right: 16px; }
.project td { display: flex; align-items: center; height: 100%; border-bottom: 1px solid #1d1d1d; font: 11px/14px "Liberation Sans", "Noto Sans CJK KR", sans-serif; color: #a8a8a8; }
.twirl { width: 14px; padding-left: 2px; }
.kind { display: flex; justify-content: center; width: 16px; }
.label { flex: 1; margin-left: 1px; padding: 2px 0 0 3px; }
.selected .label { background: #9d9d9d; color: #161616; font-weight: 700; }
.project tr.selected { background: #2e2e2e; }
.chart { position: absolute; right: 2px; top: 20px; color: #a8a8a8; }
.pfoot { display: flex; align-items: center; flex: 1; border-top: 2px solid #181818; color: #b0b0b0; }
.pfoot button { display: flex; justify-content: center; width: 23px; }
.pfoot .bpc { width: 48px; height: 14px; border: 1px solid #2d2d2d; background: #1c1c1c; border-radius: 2px; font-size: 9px; line-height: 12px; color: #858585; }
.thumbbar { width: 31px; height: 13px; margin-left: 2px; border-radius: 7px; background: #343434; }

.viewer { display: flex; flex-direction: column; flex: 1; min-width: 0; border: 1px solid #214f7c; border-right: 0; background: #232323; }
.vtabs { display: flex; gap: 33px; height: 23px; padding: 0 9px; }
.vtab { display: flex; align-items: center; gap: 9px; color: #8a8a8a; }
.vtab.on { gap: 0; border-bottom: 2px solid #a8a8a8; }
.x { width: 14px; color: #989898; }
.latch { margin: 0 7px; color: #b0b0b0; }
.pm { color: #b0b0b0; }
.vtab .pm { margin-left: 6px; }
.vtab b { color: #2d8ceb; font-weight: 400; }
.sw { width: 11px; height: 11px; }
.sand { --c: #ad9877; }
.lavender { --c: #a9a7c9; }
.aqua { --c: #a8cbc6; }
.sw.sand, .sw.lavender, .sw.aqua { background: var(--c); }
.crumbs { display: flex; align-items: center; gap: 7px; height: 25px; padding: 0 16px; border-bottom: 1px solid #171717; color: #8a8a8a; }
.crumb { display: flex; align-items: center; gap: 11px; height: 16px; padding: 0 3px 0 9px; border: 1px solid #2d2d2d; background: #171717; border-radius: 2px; color: #2d8ceb; }
.crumb svg { transform: rotate(180deg); }
.stage { display: flex; align-items: flex-start; justify-content: center; flex: 1; padding: 3px 24px 0 0; }
.frame { position: relative; width: 412px; height: 260px; padding: 5px 8px 5px 6px; border: 1px solid #6f948c; }
.h { position: absolute; width: 6px; height: 6px; background: #a8cbc6; }
.tl { left: -4px; top: -3px; } .tr { right: -3px; top: -3px; } .bl { left: -4px; bottom: -3px; } .br { right: -3px; bottom: -3px; }
.vfoot { display: flex; align-items: center; height: 20px; border-top: 1px solid #181818; color: #b0b0b0; white-space: nowrap; }
.vfoot button { display: flex; align-items: center; justify-content: center; width: 20px; height: 18px; flex: none; }
.vfoot .dark { background: #171717; }
.vfoot .clock { width: 63px; height: 16px; margin: 0 1px; border: 1px solid #2d2d2d; color: #858585; }
.vfoot .bar { width: 1px; height: 16px; background: #343434; margin: 0 1px; }
.vfoot .expo { width: auto; margin-left: 2px; color: #2d7fcf; }
.drop { position: relative; display: flex; align-items: center; height: 14px; background: #1b1b1b; color: #b0b0b0; }
.drop select { flex: 1; min-width: 0; height: 100%; padding-left: 6px; appearance: none; line-height: 14px; }
.drop svg { position: absolute; right: 4px; pointer-events: none; }
.vfoot .drop { flex: none; height: 16px; margin: 0 1px; border: 1px solid #2b2b2b; }
.vfoot .zoomsel { width: 63px; } .vfoot .ressel { width: 79px; } .vfoot .camsel { width: 97px; } .vfoot .viewsel { width: 63px; }

.timeline { display: flex; flex-direction: column; flex: 1; margin: 2px 0 0 1px; background: #232323; }
.ttabs { display: flex; height: 24px; }
.ttab { display: flex; align-items: center; }
.ttab span { margin-left: 10px; }
.ttab.on { margin-left: 10px; border-bottom: 2px solid #b0b0b0; color: #b8b8b8; }
.ttab .pm { margin-left: 7px; }
.t2 { margin-left: 32px; } .t3 { margin-left: 49px; } .t4 { margin-left: 42px; }
.tbody { display: flex; flex: 1; }
.outline { flex: 0 0 518px; min-width: 0; border-right: 2px solid #141414; }
.tctl { display: flex; height: 34px; border-bottom: 1px solid #141414; }
.time { width: 101px; padding-left: 10px; color: #1b4c7f; font: 10px/12px "Liberation Sans", sans-serif; white-space: nowrap; }
.time button { display: block; margin: 4px 0 0 3px; color: #2d8ceb; font-size: 15px; line-height: 18px; }
.time span { display: block; line-height: 10px; }
.lsearch { width: 231px; margin: 8px 0 0; padding-left: 5px; }
.switches { display: flex; align-items: center; margin-left: 8px; color: #b0b0b0; }
.switches button { display: flex; justify-content: center; width: 28px; }
.switches button:nth-child(2) { margin-right: 4px; }
.switches button:nth-child(n + 4) { width: 24px; }
.switches button:last-child { margin-left: 8px; }
.layers tr { display: grid; grid-template-columns: 16px 14px 14px 14px 18px 15px 30px 123px 66px 18px 64px 23px 83px; align-items: center; height: 16px; padding-left: 1px; border-bottom: 1px solid #242424; background: #2e2e2e; }
.layers thead tr { height: 18px; background: #303030; border-bottom: 1px solid #161616; grid-template-columns: 16px 14px 14px 14px 18px 15px 30px 120px 72px 16px 62px 106px 14px; font-size: 8px; color: #a0a0a0; }
.layers th { display: flex; align-items: center; justify-content: center; height: 11px; white-space: nowrap; }
.layers th.sep { border-left: 1px solid #161616; justify-content: flex-start; padding-left: 4px; }
.layers th.trk { justify-content: flex-start; padding-left: 4px; }
.layers tr.selected { background: #464646; border-color: #3a3a3a; }
.layers td { display: flex; align-items: center; height: 15px; color: #b0b0b0; }
.layers td.mid { justify-content: center; }
.layers td.twist { padding-left: 3px; }
.cell { display: flex; align-items: center; justify-content: center; width: 12px; height: 13px; margin-left: 3px; background: #242424; color: #b8b8b8; }
.layers .selected .cell { background: #333; }
.layers .sw { width: 12px; height: 12px; margin-left: 1px; }
.idx { padding-left: 6px; font: 700 11px/14px "Liberation Sans", sans-serif; }
.layers .name { font: 11px/13px "Liberation Sans", "Noto Sans CJK KR", sans-serif; }
.name .kind { margin: 0 1px; }
.name b { flex: 1; margin-right: 3px; padding: 1px 0 0 3px; }
.selected .name b { padding: 1px 0 0 2px; border: 1px solid #a8a8a8; background: #484848; line-height: 12px; }
.layers .drop { width: 63px; margin-left: 1px; height: 13px; }
.layers td:nth-child(11) .drop { width: 60px; margin-left: 2px; }
.layers td:nth-child(13) .drop { width: 82px; }
.layers select { line-height: 13px; }
.flag { appearance: none; width: 12px; height: 12px; background: #242424; }
.prop .flag { background: #1c1c1c; }
.layers tr.prop { height: 15px; background: #262626; border-color: #202020; }
.layers tr.tall { height: 16px; }
.prop td { font: 11px/14px "Liberation Sans", sans-serif; height: 14px; }
.prop .lead { grid-column: 1 / 9; gap: 8px; padding-left: 82px; }
.prop .deep { padding-left: 96px; }
.prop .deep .sw { width: 10px; height: 10px; margin-left: 0; }
.maskname { flex: 1; height: 14px; margin: 0 3px 0 -5px; padding-left: 3px; border: 1px solid #585858; background: #464646; line-height: 14px; }
.prop .drop { width: 58px; font: 10px/14px "Noto Sans CJK KR", sans-serif; }
.inv { grid-column: 10 / 14; }
.inv label { display: flex; align-items: center; gap: 3px; margin-left: -2px; }
.reset { margin-left: 2px; color: #2d8ceb; }

.tracks { position: relative; flex: 1; min-width: 0; overflow: hidden; background: #2a2a2a; }
.navbar { height: 17px; padding: 8px 0 0; background: #232323; }
.navbar::after { content: ""; display: block; height: 9px; background: #666; border: solid #141414; border-width: 1px 0; }
.navbar i { position: absolute; left: 0; width: 7px; height: 8px; margin-top: 1px; border-radius: 4px 0 0 4px; background: #2d8ceb; }
.ruler { position: relative; height: 17px; background: #232323; color: #a0a0a0; font: 10px/16px "Liberation Sans", sans-serif; }
.ruler .zero { margin-left: -3px; }
.sec { position: absolute; top: 0; bottom: 0; width: 30px; margin-left: -16px; text-align: center; }
.sec::after { content: ""; position: absolute; left: 16px; bottom: 0; width: 1px; height: 4px; background: #999; }
.area { position: relative; height: 15px; margin-left: 1px; background: #5e5e5e; border: solid #141414; border-width: 1px 0; }
.grip { display: block; width: 5px; height: 13px; border-radius: 3px 0 0 3px; background: #2d8ceb; }
.marker { position: absolute; right: 20px; top: 0; display: flex; align-items: flex-end; height: 13px; }
.marker svg { position: relative; z-index: 1; margin-right: -5px; }
.marker em { width: 18px; height: 11px; margin-bottom: 2px; border: 1px solid #555; background: #b0b0b0; color: #111; font: 10px/10px "Liberation Sans", sans-serif; text-align: center; }
.cache { position: relative; height: 3px; margin-left: 7px; }
.cache i { position: absolute; top: 0; height: 3px; background: #12ba1c; }
.track { position: relative; height: 16px; padding-left: 7px; background: #333; border-bottom: 1px solid #242424; }
.track.masks, .track.transform { height: 15px; }
.track > svg { margin: 2px 0 0 -4px; }
.clip { height: 15px; border-radius: 3px 0 0 0; background: #736a5b; }
.lavender .clip { background: #767389; border-radius: 0; }
.selected .clip { background: linear-gradient(#b5a68c, #9f8f75 20%, #8e7d61); }
.playhead { position: absolute; left: 7px; top: 21px; bottom: 0; width: 1px; background: #2d8ceb; }
.playhead svg { margin-left: -5px; }

.note { position: absolute; z-index: 6; pointer-events: none; color: #e51d1d; font: 700 28px/24px "DejaVu Sans", sans-serif; }
.note path { fill: none; stroke: #e51d1d; stroke-width: 3; stroke-linecap: round; }
.one { left: 182px; top: 44px; font: 700 26px/24px "Liberation Sans", sans-serif; }
.one svg { position: absolute; left: 0; top: -4px; }
.two { left: 396px; top: 93px; }
.three { left: 53px; top: 513px; font-size: 26px; }
.line { left: 124px; top: 537px; }
</style>
